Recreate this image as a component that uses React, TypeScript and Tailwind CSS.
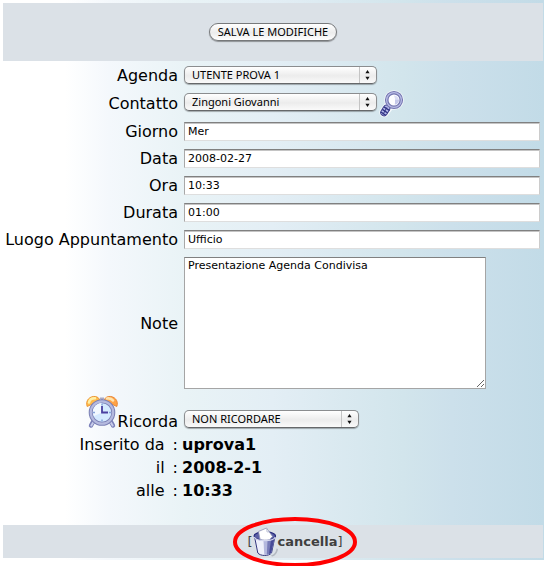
import React from 'react';

interface SelectFieldProps {
  id: string;
  options: string[];
  className: string;
}

interface TextField {
  id: string;
  label: string;
  value: string;
}

const textFields: TextField[] = [
  { id: 'giorno', label: 'Giorno', value: 'Mer' },
  { id: 'data', label: 'Data', value: '2008-02-27' },
  { id: 'ora', label: 'Ora', value: '10:33' },
  { id: 'durata', label: 'Durata', value: '01:00' },
  { id: 'luogo', label: 'Luogo Appuntamento', value: 'Ufficio' },
];

const details = [
  { label: 'Inserito da', value: 'uprova1' },
  { label: 'il', value: '2008-2-1' },
  { label: 'alle', value: '10:33' },
];

function SelectField({ id, options, className }: SelectFieldProps) {
  return (
    <div className={`relative h-[18px] ${className}`}>
      <select
        id={id}
        className="block h-full w-full appearance-none rounded-[5px] border border-[#8b8d8f] border-b-[#66686a] bg-linear-to-b from-white via-[#ececec] via-55% to-[#fafafa] pl-[7px] pr-4 font-['Noto_Sans',sans-serif] text-[11px] leading-4 text-black shadow-[0_1px_1px_rgba(0,0,0,0.3)]"
      >
        {options.map((option) => (
          <option key={option}>{option}</option>
        ))}
      </select>
      <svg
        viewBox="0 0 18 18"
        className="pointer-events-none absolute right-0 top-0 h-[18px] w-[18px]"
        aria-hidden="true"
      >
        <path d="M0.5 1v16" stroke="#c4c4c4" />
        <path d="M6.4 7.2 8.5 4l2.1 3.2zM6.4 10.8h4.2L8.5 14z" fill="#111" />
      </svg>
    </div>
  );
}

function MagnifierIcon() {
  return (
    <svg viewBox="0 0 26 28" className="h-7 w-[26px]" aria-hidden="true">
      <path d="M10 16 5 22.500" stroke="#f6f9fc" strokeWidth="9.500" strokeLinecap="round" />
      <circle cx="15" cy="10" r="9.800" fill="#f6f9fc" />
      <path d="m11 15-3 3.500" stroke="#8587bd" strokeWidth="4" />
      <path d="M7.500 18.500 5 22.500" stroke="#41438e" strokeWidth="7.600" strokeLinecap="round" />
      <path d="M7.500 18.500 5 22.500" stroke="#b4b9ea" strokeWidth="5.600" strokeLinecap="round" />
      <path
        d="m5 16.800 5.500 3.700M3.300 19.300l5.400 3.700M2 22l4.600 3.300"
        stroke="#303283"
        strokeWidth="1.400"
      />
      <path d="m7.800 17.500-3.800 7" stroke="#303283" strokeWidth="1" />
      <circle cx="15" cy="10" r="7.300" fill="#fdfdff" stroke="#7476b0" strokeWidth="3.600" />
      <circle cx="15" cy="10" r="7.400" fill="none" stroke="#b7bae4" strokeWidth="1.300" />
      <path d="M15 5.500a4.800 4.800 0 0 1 4.800 5.200c-.4 2.400-2 3.500-4.300 3.800 1-2.700 1-5.800-.5-9z" fill="#dcdef4" />
      <path d="M16 9.800h4c0 2.800-1.600 4.400-4 4.700z" fill="#c5c8e9" />
    </svg>
  );
}

function ClockIcon() {
  return (
    <svg viewBox="0 0 32 34" className="h-[34px] w-8" aria-hidden="true">
      <path d="m8 25-3 5.500M24 25l3 5.500" stroke="#7b80b9" strokeWidth="4.400" strokeLinecap="round" />
      <path d="m7.500 27-2.200 3.500M24.500 27l2.200 3.500" stroke="#c8ccea" strokeWidth="2" strokeLinecap="round" />
      <path d="M16 3v5M14 3.500h4" stroke="#a8a9c5" strokeWidth="2" />
      <path d="M1.200 11.500C-1 5.500 4 .8 9.200 1.500c2.400.3 4.200 1.700 4.500 4z" fill="#ffb94a" stroke="#ec9838" />
      <path d="M30.800 11.500C33 5.500 28 .8 22.800 1.500c-2.400.3-4.200 1.700-4.500 4z" fill="#ffa345" stroke="#e98736" />
      <path d="M3 7.500c.6-2.800 3-4.400 6-4.300" fill="none" stroke="#fff0a6" strokeWidth="2.600" strokeLinecap="round" />
      <path d="M21 3.500c2.600-.4 5 .5 6 2" fill="none" stroke="#ffe4ae" strokeWidth="2.600" strokeLinecap="round" />
      <circle cx="16" cy="17.500" r="11.300" fill="#d5eaff" stroke="#7b80b5" strokeWidth="4" />
      <circle cx="16" cy="17.500" r="11.200" fill="none" stroke="#b5badf" strokeWidth="2.200" />
      <path d="M8 12.500a9 9 0 0 1 8-4.500v9.500L8 21a9 9 0 0 1 0-8.500z" fill="#f2f9ff" />
      <path d="M16 8.500v2M16 24.500v2M7 17.500h2M23 17.500h2" stroke="#86a4dc" strokeWidth="1.500" />
      <path d="M16 11v6.500h6" fill="none" stroke="#4a3fa0" strokeWidth="1.800" />
    </svg>
  );
}

function TrashIcon() {
  return (
    <svg viewBox="0 0 25 30" className="h-[30px] w-[25px]" aria-hidden="true">
      <path d="M18 28.500c3.500-.8 5-3.500 5.500-7l1.500.5c-.5 4-3 7-6 7.500z" fill="#a3a8b0" opacity=".7" />
      <path d="M1.500 9.500 4.800 26c2.700 3.300 11 3.300 13.700 0L22 9.500z" fill="#eef0fb" stroke="#34377f" />
      <path d="m10.500 14 .8 14c3 0 5.500-.7 6.900-2.200L21.500 11.500z" fill="#b4b8de" />
      <path d="m14.500 14-.7 13.800c1.900-.3 3.400-1 4.400-2L21.500 11c-1.500 1.700-4 2.700-7 3z" fill="#777bb8" />
      <path d="m18 13-2 14 2.200-1.300L21.600 11z" fill="#474b97" />
      <ellipse cx="11.800" cy="9" rx="10.700" ry="4.300" fill="#5b60a5" stroke="#25287c" strokeWidth="1.200" />
      <path d="m5.500 4.500 8-3.500 6 8.500-3 3.200c-3.500.8-7 .5-9.500-.5z" fill="#fff" stroke="#8d91b5" strokeWidth=".8" />
      <path d="m13.500 1 .5 4 2.500-.2" fill="none" stroke="#b8bbd2" strokeWidth=".8" />
      <path d="M1.300 10c2 4.800 19 4.800 21 0" fill="none" stroke="#d5d8ef" strokeWidth="1.200" />
    </svg>
  );
}

export default function App() {
  return (
    <main className="bg-white pb-[6px] font-['DejaVu_Sans',Verdana,sans-serif] text-base leading-[23px] text-black">
      <form
        className="bg-[linear-gradient(to_right,#fff_0%,#fff_12%,#f4f8fc_20%,#e9f3f6_34%,#e3eef5_50%,#d2e5ec_74%,#cce0eb_83%,#c2dbe7_100%)] pb-[2px] pl-[3px] pr-px pt-[3px]"
        onSubmit={(e) => e.preventDefault()}
      >
        <div className="flex h-[58px] items-center justify-center bg-[#dbe1e7]">
          <button
            type="submit"
            className="h-[18px] rounded-full border border-[#77797b] bg-linear-to-b from-white via-[#ececec] via-55% to-white px-2 font-['Noto_Sans',sans-serif] text-[11px] leading-4 shadow-[0_1px_1px_rgba(0,0,0,0.35)]"
          >
            SALVA LE MODIFICHE
          </button>
        </div>

        <div className="grid grid-cols-[175px_1fr] items-center gap-x-[6px] pr-[3px]">
          <label htmlFor="agenda" className="text-right">Agenda</label>
          <div className="flex h-7 items-center">
            <SelectField id="agenda" options={['UTENTE PROVA 1']} className="w-[193px]" />
          </div>

          <label htmlFor="contatto" className="text-right">Contatto</label>
          <div className="flex h-[29px] items-center gap-[2px]">
            <SelectField id="contatto" options={['Zingoni Giovanni']} className="mb-1 w-[193px]" />
            <button type="button" aria-label="Cerca contatto">
              <MagnifierIcon />
            </button>
          </div>

          {textFields.map((field) => (
            <React.Fragment key={field.id}>
              <label htmlFor={field.id} className="whitespace-nowrap text-right">
                {field.label}
              </label>
              <div className="flex h-[27px] items-center">
                <input
                  id={field.id}
                  type="text"
                  defaultValue={field.value}
                  className="h-[19px] w-full border border-b-[#dedede] border-l-[#a8a8a8] border-r-[#cccccc] border-t-[#808080] bg-white px-[3px] text-[11px] leading-4 shadow-[inset_0_1px_0_#c4c4c4]"
                />
              </div>
            </React.Fragment>
          ))}

          <label htmlFor="note" className="text-right">Note</label>
          <div className="py-1">
            <textarea
              id="note"
              defaultValue="Presentazione Agenda Condivisa"
              className="block h-[132px] w-[302px] resize border border-[#a5a5a5] border-t-[#808080] bg-white px-[3px] py-0 text-[11px] leading-4"
            />
          </div>

          <div className="flex h-10 items-end justify-end">
            <div className="pb-1">
              <ClockIcon />
            </div>
            <label htmlFor="ricorda">Ricorda</label>
          </div>
          <div className="flex h-10 items-end pb-[5px]">
            <SelectField id="ricorda" options={['NON RICORDARE']} className="w-[175px]" />
          </div>
        </div>

        <dl className="grid grid-cols-[175px_1fr] gap-x-1 pb-[23px]">
          {details.map((detail) => (
            <React.Fragment key={detail.label}>
              <dt className="flex justify-end gap-2">
                <span>{detail.label}</span>
                <span>:</span>
              </dt>
              <dd className="font-bold">{detail.value}</dd>
            </React.Fragment>
          ))}
        </dl>

        <div className="flex h-[33px] items-center justify-center bg-[#dbe1e7] pl-11 text-[13px] text-[#3f3f3f]">
          <div className="relative flex items-center">
            <span>[</span>
            <a href="#cancella" className="flex items-center font-bold">
              <TrashIcon />
              cancella
            </a>
            <span>]</span>
            <svg
              viewBox="0 0 126 52"
              className="pointer-events-none absolute left-1/2 top-1/2 h-[52px] w-[126px] -translate-x-1/2 -translate-y-1/2"
              aria-hidden="true"
            >
              <ellipse cx="63" cy="26" rx="60" ry="23" fill="none" stroke="#f00" strokeWidth="4" />
            </svg>
          </div>
        </div>
      </form>
    </main>
  );
}
